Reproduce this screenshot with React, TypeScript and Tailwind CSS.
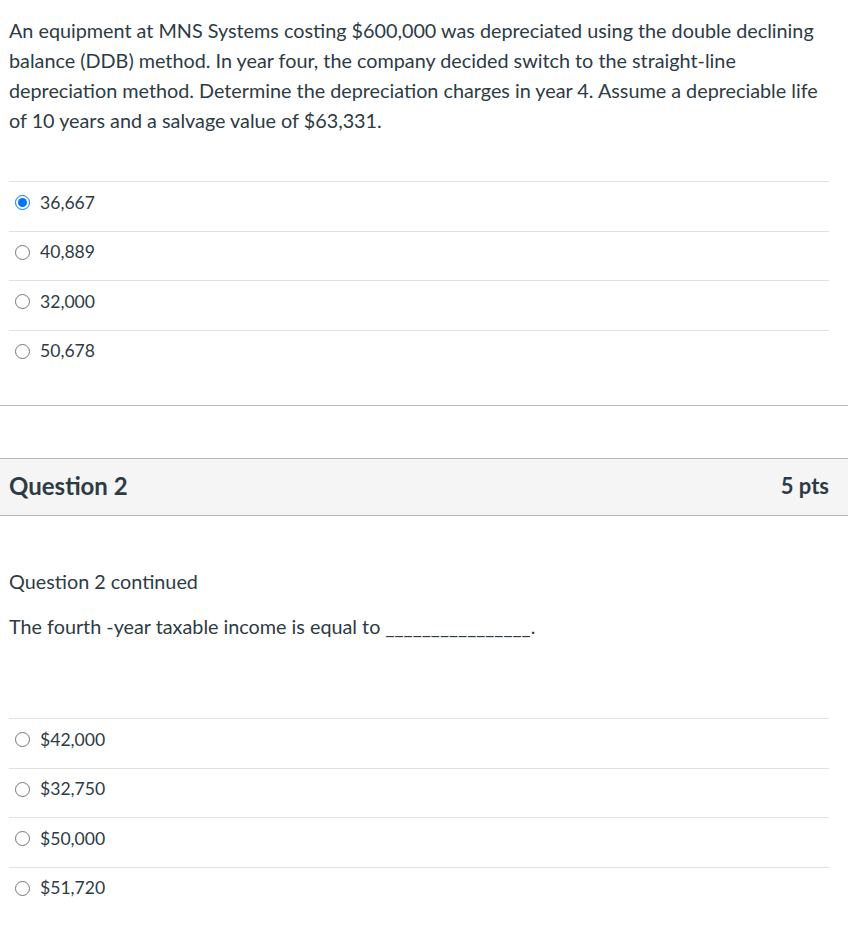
import React from "react";

const font = { fontFamily: "Lato, 'Open Sans', sans-serif" };

function Answer({ label, checked }: { label: string; checked?: boolean }) {
  return (
    <label className="flex items-center gap-[10px] border-t border-[#dfe1e3] pt-[9.5px] pb-[17px] pl-[6px] text-[17.6px] leading-[22px] text-[#2d3b45]">
      <input
        type="radio"
        defaultChecked={checked}
        name={label.startsWith("$") ? "q2" : "q1"}
        className="m-0 h-[15px] w-[15px] shrink-0"
      />
      <span>{label}</span>
    </label>
  );
}

export default function App() {
  return (
    <div className="min-h-[931px] bg-white text-[#2d3b45]" style={font}>
      <div className="pl-[9px] pr-[19px] pt-[15px]">
        <p className="text-[19.8px] leading-[30px]">
          An equipment at MNS Systems costing $600,000 was depreciated using the double declining
          balance (DDB) method. In year four, the company decided switch to the straight-line
          depreciation method. Determine the depreciation charges in year 4. Assume a depreciable
          life of 10 years and a salvage value of $63,331.
        </p>
        <div className="mt-[46px]">
          <Answer label="36,667" checked />
          <Answer label="40,889" />
          <Answer label="32,000" />
          <Answer label="50,678" />
        </div>
      </div>

      <div className="mt-[26px] border-t border-[#b5b9bc]" />

      <div className="mt-[52px] flex h-[58px] items-center justify-between border-y border-[#b5b9bc] bg-[#f5f5f5] pb-[2px] pl-[9px] pr-[19px]">
        <h2 className="text-[24px] font-bold leading-[28px]">Question 2</h2>
        <span className="text-[22px] font-bold leading-[28px]">5 pts</span>
      </div>

      <div className="pl-[9px] pr-[19px] pt-[50px]">
        <p className="text-[19.8px] leading-[30px]">Question 2 continued</p>
        <p className="mt-[15px] text-[19.8px] leading-[30px]">
          The fourth -year taxable income is equal to ________________.
        </p>
        <div className="mt-[77px]">
          <Answer label="$42,000" />
          <Answer label="$32,750" />
          <Answer label="$50,000" />
          <Answer label="$51,720" />
        </div>
      </div>
    </div>
  );
}
